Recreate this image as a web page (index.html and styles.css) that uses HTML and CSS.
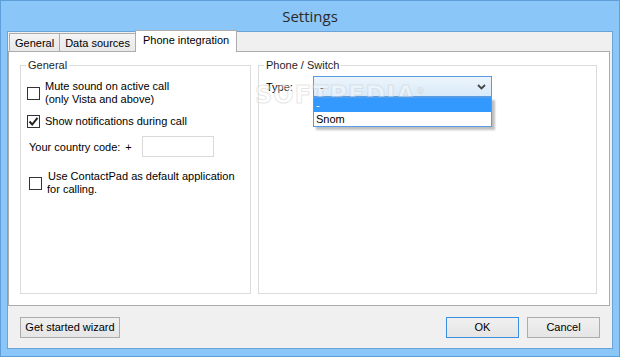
FILE: index.html
```html
<!DOCTYPE html>
<html lang="en">
<head>
    <meta charset="UTF-8">
    <title>Settings</title>
    <link rel="stylesheet" href="styles.css">
</head>
<body>

    <div class="window">
        <div class="titlebar">Settings</div>

        <div class="client">

            <div class="tabs">
                <div class="tab">General</div>
                <div class="tab">Data sources</div>
                <div class="tab active">Phone integration</div>
            </div>

            <div class="panel">

                <fieldset class="group group-general">
                    <legend>General</legend>

                    <div class="check-row row-mute">
                        <span class="box"></span>
                        <span class="check-text">Mute sound on active call<br>(only Vista and above)</span>
                    </div>

                    <div class="check-row row-notify">
                        <span class="box checked">
                            <svg width="11" height="11" viewBox="0 0 11 11"><path d="M1.5 5.5 L4.2 8.5 L9.5 1.8" fill="none" stroke="#222" stroke-width="2"/></svg>
                        </span>
                        <span class="check-text">Show notifications during call</span>
                    </div>

                    <div class="country-row">
                        <span class="country-label">Your country code:</span>
                        <span class="plus">+</span>
                        <span class="textbox"></span>
                    </div>

                    <div class="check-row row-default">
                        <span class="box"></span>
                        <span class="check-text">Use ContactPad as default application<br><span class="second">for calling.</span></span>
                    </div>
                </fieldset>

                <fieldset class="group group-phone">
                    <legend>Phone / Switch</legend>

                    <div class="type-row">
                        <span class="type-label">Type:</span>
                        <div class="select">
                            <span class="select-value">-</span>
                            <svg class="chevron" width="9" height="6" viewBox="0 0 9 6"><path d="M1 1 L4.5 4.5 L8 1" fill="none" stroke="#444" stroke-width="1.8"/></svg>
                            <div class="droplist">
                                <div class="item selected">-</div>
                                <div class="item">Snom</div>
                            </div>
                        </div>
                    </div>

                    <div class="watermark">SOFTPEDIA<sup>®</sup></div>
                </fieldset>

            </div>

            <div class="footer">
                <button class="btn btn-wizard">Get started wizard</button>
                <div class="spacer"></div>
                <button class="btn btn-ok">OK</button>
                <button class="btn btn-cancel">Cancel</button>
            </div>

        </div>
    </div>

</body>
</html>
```

FILE: styles.css
```css
body{
    margin: 0;
    font-family: "Liberation Sans", Arial, sans-serif;
    font-size: 11px;
    color: #000;
}

.window{
    width: 620px;
    height: 357px;
    box-sizing: border-box;
    background: #8ac6f8;
    border: 1px solid #5f9fd8;
    display: flex;
    flex-direction: column;
}

.titlebar{
    height: 30px;
    line-height: 30px;
    text-align: center;
    font-family: "Open Sans", "Liberation Sans", sans-serif;
    font-size: 15px;
    color: #2a2a2a;
}

.client{
    margin: 0 6px 0 6px;
    height: 318px;
    box-sizing: border-box;
    background: #f0f0f0;
    border: 1px solid #6ba3d8;
    display: flex;
    flex-direction: column;
}

.tabs{
    display: flex;
    height: 19px;
    padding-left: 1px;
    align-items: flex-end;
}

.tab{
    height: 17px;
    line-height: 18px;
    padding: 0 5px;
    border: 1px solid #acacac;
    border-bottom: none;
    margin-right: -1px;
    background: linear-gradient(#f4f4f4, #e8e8e8);
}

.tab.second-tab{
    padding: 0 4px;
}

.tab.active{
    height: 21px;
    line-height: 19px;
    padding: 0 7px;
    margin-left: 0;
    background: #fff;
    position: relative;
    top: 1px;
    z-index: 1;
}

.panel{
    height: 255px;
    box-sizing: border-box;
    background: #fff;
    border: 1px solid #acacac;
    margin-right: 2px;
    padding: 6px 12px 11px 11px;
    display: flex;
    gap: 7px;
}

.group{
    margin: 0;
    border: 1px solid #dcdcdc;
    padding: 0;
    position: relative;
}

.group legend{
    margin-left: 5px;
    padding: 0 2px;
    line-height: 15px;
    color: #1e1e1e;
}

.group-general{
    width: 229px;
}

.group-phone{
    flex: 1;
}

.check-row{
    display: flex;
    align-items: center;
    position: relative;
}

.box{
    width: 11px;
    height: 11px;
    border: 1px solid #333;
    background: #fff;
    flex-shrink: 0;
    display: flex;
    align-items: center;
    justify-content: center;
}

.check-text{
    line-height: 13px;
    margin-left: 5px;
}

.row-mute{
    margin: 7px 0 0 6px;
}

.row-notify{
    margin: 9px 0 0 6px;
}

.country-row{
    display: flex;
    align-items: center;
    margin: 8px 0 0 8px;
}

.plus{
    margin-left: 5px;
}

.textbox{
    width: 70px;
    height: 19px;
    border: 1px solid #d9d9d9;
    margin-left: 10px;
}

.row-default{
    margin: 13px 0 0 8px;
}

.row-default .check-text{
    margin-left: 6px;
    line-height: 13px;
}

.row-default .second{
    margin-left: -1px;
}

.type-row{
    display: flex;
    align-items: center;
    margin: 3px 0 0 7px;
}

.type-label{
    width: 47px;
}

.select{
    width: 177px;
    height: 19px;
    border: 1px solid #569de5;
    background: linear-gradient(#ecf4fc, #d8eaf9);
    display: flex;
    align-items: center;
    position: relative;
}

.select-value{
    flex: 1;
    padding-left: 6px;
}

.chevron{
    margin-right: 5px;
}

.droplist{
    position: absolute;
    left: -1px;
    top: 20px;
    width: 177px;
    border: 1px solid #569de5;
    background: #fff;
    box-shadow: 3px 3px 2px rgba(0, 0, 0, 0.25);
    z-index: 3;
}

.item{
    height: 14px;
    line-height: 14px;
    padding-left: 2px;
}

.item.selected{
    background: #3399ff;
    color: #fff;
}

.watermark{
    position: absolute;
    left: -4px;
    top: 8px;
    z-index: 1;
    font-family: "DejaVu Sans", sans-serif;
    font-weight: bold;
    font-size: 24px;
    letter-spacing: 1px;
    color: rgba(255, 255, 255, 0.35);
    -webkit-text-stroke: 1px rgba(200, 200, 200, 0.45);
    pointer-events: none;
}

.watermark sup{
    font-size: 9px;
    -webkit-text-stroke: 0.5px rgba(200, 200, 200, 0.45);
}

.footer{
    flex: 1;
    display: flex;
    align-items: center;
    padding: 0 12px 0 12px;
    gap: 8px;
}

.spacer{
    flex: 1;
}

.btn{
    font-family: "Liberation Sans", Arial, sans-serif;
    font-size: 11px;
    height: 21px;
    border: 1px solid #acacac;
    background: linear-gradient(#f0f0f0, #e5e5e5);
    color: #000;
    padding: 0;
}

.btn-wizard{
    width: 100px;
}

.btn-ok, .btn-cancel{
    width: 73px;
}

.btn-ok{
    border-color: #3c8fe0;
}
```
